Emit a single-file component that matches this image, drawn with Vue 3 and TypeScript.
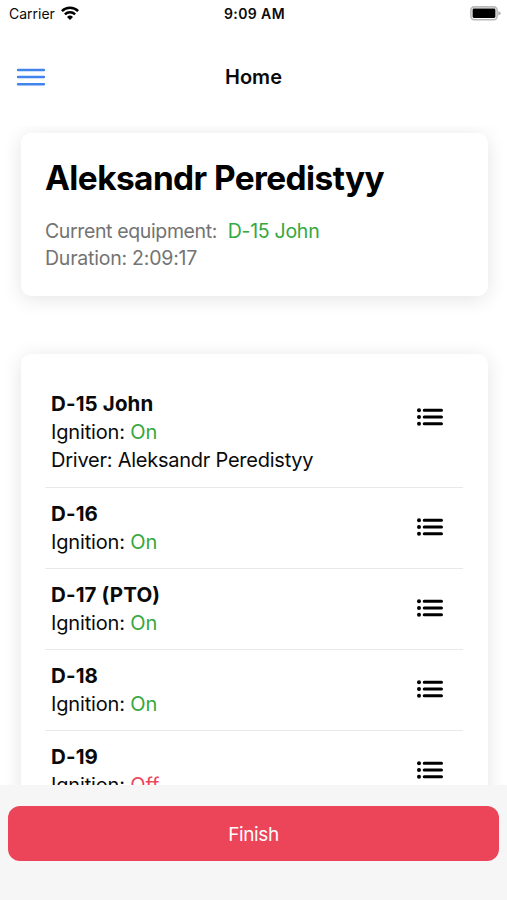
<script setup lang="ts">
interface Equipment {
  name: string
  ignition: 'On' | 'Off'
  driver?: string
}

const user = { name: 'Aleksandr Peredistyy', equipment: 'D-15 John', duration: '2:09:17' }

const equipment: Equipment[] = [
  { name: 'D-15 John', ignition: 'On', driver: 'Aleksandr Peredistyy' },
  { name: 'D-16', ignition: 'On' },
  { name: 'D-17 (PTO)', ignition: 'On' },
  { name: 'D-18', ignition: 'On' },
  { name: 'D-19', ignition: 'Off' },
]
</script>

<template>
  <div class="screen">
    <div class="status-bar">
      <div class="carrier">
        <span>Carrier</span>
        <svg class="wifi" width="18" height="14" viewBox="0 0 18 14" aria-hidden="true">
          <g fill="none" stroke="#000" stroke-width="2.5">
            <path d="M0.9 5.1A11.5 11.5 0 0 1 17.1 5.1" />
            <path d="M3.9 8.4A7.2 7.2 0 0 1 14.1 8.4" />
          </g>
          <path d="M9 13.9L6 10.9A4.4 4.4 0 0 1 12 10.9Z" />
        </svg>
      </div>
      <span class="clock">9:09 AM</span>
      <div class="battery-slot">
        <svg width="31" height="15" viewBox="0 0 31 15" aria-hidden="true">
          <rect x="0.9" y="0.9" width="26.2" height="12.8" rx="3.4" fill="#fff" stroke="#b8b8b8" stroke-width="1.6" />
          <rect x="2.6" y="2.6" width="22.8" height="9.4" rx="1.4" />
          <path d="M28.4 5.2Q30.6 5.8 30.6 7.3T28.4 9.4Z" fill="#aaa" />
        </svg>
      </div>
    </div>

    <header class="nav">
      <button class="menu" type="button" aria-label="Menu">
        <svg width="30" height="20" viewBox="0 0 30 20">
          <path d="M2.1 3H27.9M2.1 10.1H27.9M2.1 17.3H27.9" stroke="#4284ee" stroke-width="2.5" stroke-linecap="round" />
        </svg>
      </button>
      <h1 class="title">Home</h1>
    </header>

    <main class="content">
      <section class="card profile">
        <h2 class="user-name">{{ user.name }}</h2>
        <p class="info">Current equipment: <span class="current">{{ user.equipment }}</span></p>
        <p class="info duration">Duration: {{ user.duration }}</p>
      </section>

      <section class="card list">
        <article v-for="item in equipment" :key="item.name" class="row">
          <div class="details">
            <h3 class="name">{{ item.name }}</h3>
            <p class="line">Ignition: <span :class="item.ignition === 'On' ? 'on' : 'off'">{{ item.ignition }}</span></p>
            <p v-if="item.driver" class="line driver">Driver: {{ item.driver }}</p>
          </div>
          <svg class="list-icon" width="27" height="20" viewBox="0 0 27 20" aria-hidden="true">
            <g stroke="#000" stroke-width="3" stroke-linecap="round">
              <path d="M7.2 3.3H24.5M7.2 10H24.5M7.2 16.7H24.5" />
            </g>
            <circle cx="2" cy="3.3" r="2" />
            <circle cx="2" cy="10" r="2" />
            <circle cx="2" cy="16.7" r="2" />
          </svg>
        </article>
      </section>
    </main>

    <footer class="footer">
      <button class="finish" type="button"><span>Finish</span></button>
    </footer>
  </div>
</template>

<style>
body {
  background: #fff;
}
</style>

<style scoped>
.screen {
  display: flex;
  flex-direction: column;
  width: 507px;
  height: 900px;
  overflow: hidden;
  background: #fff;
  color: #0a0a0a;
  font-family: Inter, "Liberation Sans", sans-serif;
}

h1, h2, h3, p {
  margin: 0;
}

button {
  border: 0;
  padding: 0;
  font-family: inherit;
}

.status-bar {
  display: grid;
  grid-template-columns: 1fr auto 1fr;
  align-items: center;
  height: 27px;
  padding: 0 6px 0 9px;
  flex: none;
  font-size: 14px;
}

.carrier {
  display: flex;
  align-items: center;
  gap: 6px;
}

.wifi {
  margin-top: -1px;
}

.clock {
  margin-left: -1px;
  font-weight: 600;
  letter-spacing: 0.4px;
}

.battery-slot {
  display: flex;
  justify-content: flex-end;
}

.nav {
  display: grid;
  grid-template-columns: 60px 1fr 60px;
  align-items: center;
  flex: none;
  height: 99px;
}

.menu {
  display: flex;
  margin-left: 16px;
  background: none;
}

.title {
  text-align: center;
  font-size: 20px;
  font-weight: 600;
}

.content {
  display: flex;
  flex: 1;
  flex-direction: column;
  gap: 58px;
  min-height: 0;
  padding: 6.5px 19.5px 0 20.5px;
  overflow: hidden;
}

.card {
  flex: none;
  border-radius: 10px;
  background: #fff;
  box-shadow: 0 3px 20px rgba(0, 0, 0, 0.11);
}

.profile {
  height: 163px;
  padding: 23px 24.5px 0;
  box-sizing: border-box;
}

.user-name {
  height: 44px;
  line-height: 44px;
  font-size: 33.4px;
  font-weight: 700;
  letter-spacing: -0.57px;
  color: #000;
}

.info {
  line-height: 27px;
  font-size: 19.5px;
  letter-spacing: -0.37px;
  color: #737373;
}

.duration {
  letter-spacing: -0.22px;
}

.user-name + .info {
  margin-top: 18px;
}

.current {
  margin-left: 5.5px;
  letter-spacing: -0.27px;
  color: #34a840;
}

.list {
  padding: 25.5px 24.5px;
}

.row {
  display: flex;
  justify-content: space-between;
  align-items: flex-start;
  padding: 12px 19px 12px 6px;
  border-bottom: 1px solid #e9e9e9;
}

.row:first-child {
  padding-top: 11px;
  padding-bottom: 13px;
}

.name,
.line {
  line-height: 28px;
  font-size: 20px;
}

.name {
  font-size: 20.5px;
  font-weight: 700;
  letter-spacing: 0.12px;
}

.line {
  letter-spacing: -0.16px;
}

.driver {
  letter-spacing: -0.24px;
}

.on {
  color: #34a840;
}

.off {
  color: #ec455a;
}

.list-icon {
  margin-top: 17px;
}

.footer {
  flex: none;
  height: 115px;
  box-sizing: border-box;
  padding: 21px 8px 0;
  background: #f6f6f6;
}

.finish {
  width: 100%;
  height: 55px;
  padding-top: 1px;
  border-radius: 12px;
  background: #ec455a;
  color: #fff;
  font-size: 19px;
  letter-spacing: -0.4px;
}
</style>
